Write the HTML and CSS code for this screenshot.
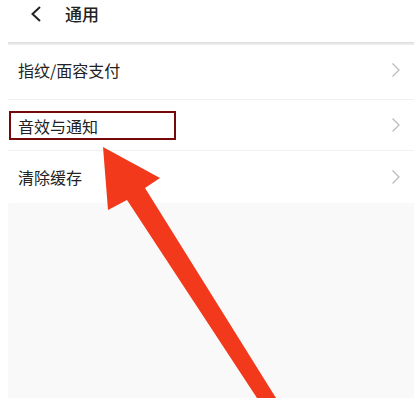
FILE: index.html
```html
<!DOCTYPE html>
<html lang="zh-CN">
  <head>
    <meta charset="UTF-8" />
    <meta name="viewport" content="width=device-width, initial-scale=1.0" />
    <title>通用</title>
    <link rel="stylesheet" href="styles.css">
  </head>
  <body>
    <div class="page">
      <div class="head flex align">
        <div class="back flex center">
          <svg width="14" height="16" viewBox="0 0 14 16">
            <path d="M11 1 L3.5 8 L11 15" fill="none" stroke="#222" stroke-width="2" />
          </svg>
        </div>
        <div class="title">通用</div>
      </div>
      <div class="main">
        <ul class="list">
          <li class="flex align space">
            <span class="text">指纹/面容支付</span>
            <svg class="arrow-right" width="10" height="16" viewBox="0 0 10 16">
              <path d="M1.5 1.5 L8 8 L1.5 14.5" fill="none" stroke="#bcbcbc" stroke-width="1.3" />
            </svg>
          </li>
          <li class="flex align space">
            <span class="text mark">音效与通知</span>
            <svg class="arrow-right" width="10" height="16" viewBox="0 0 10 16">
              <path d="M1.5 1.5 L8 8 L1.5 14.5" fill="none" stroke="#bcbcbc" stroke-width="1.3" />
            </svg>
          </li>
          <li class="flex align space">
            <span class="text">清除缓存</span>
            <svg class="arrow-right" width="10" height="16" viewBox="0 0 10 16">
              <path d="M1.5 1.5 L8 8 L1.5 14.5" fill="none" stroke="#bcbcbc" stroke-width="1.3" />
            </svg>
          </li>
        </ul>
      </div>
      <!-- 标注箭头 -->
      <svg class="pointer" width="414" height="398" viewBox="0 0 414 398">
        <polygon points="103,147 160,178 145,188 276,398 257,398 127,200 108,210" fill="#f2391b" />
      </svg>
    </div>
  </body>
</html>
```

FILE: styles.css
```css
* {
  margin: 0;
  padding: 0;
}
body {
  background-color: #fff;
  font-family: "Noto Sans CJK SC", "Noto Sans", sans-serif;
  color: #222;
  overflow: hidden;
}
.flex {
  display: flex;
}
.align {
  align-items: center;
}
.center {
  justify-content: center;
  align-items: center;
}
.space {
  justify-content: space-between;
}

.page {
  position: relative;
  width: 414px;
  height: 398px;
}
.head {
  height: 42px;
  padding-left: 28px;
  padding-bottom: 14px;
  box-sizing: border-box;
}
.head .back {
  width: 16px;
  height: 16px;
  margin-right: 21px;
}
.head .title {
  font-size: 17px;
  font-weight: 500;
  line-height: 20px;
}

.main {
  margin-left: 8px;
  height: 356px;
  background-color: #f9f9f9;
  box-shadow: inset 0 4px 3px -2px #dcdcdc;
  padding-top: 3px;
  box-sizing: border-box;
}
.main .list {
  list-style: none;
  background-color: #fff;
}
.main .list li {
  height: 50px;
  padding-right: 13px;
  border-bottom: 1px solid #f1f1f1;
  font-size: 16px;
}
.main .list li:first-child {
  padding-bottom: 4px;
}
.main .list li:last-child {
  height: 52px;
  border-bottom: none;
}
.main .list .text {
  padding-left: 10px;
  line-height: 20px;
}
.main .list .mark {
  width: 167px;
  height: 29px;
  margin-left: 1px;
  padding-left: 7px;
  line-height: 26px;
  border: 2px solid #770808;
  box-sizing: border-box;
}

.pointer {
  position: absolute;
  left: 0;
  top: 0;
}
```
